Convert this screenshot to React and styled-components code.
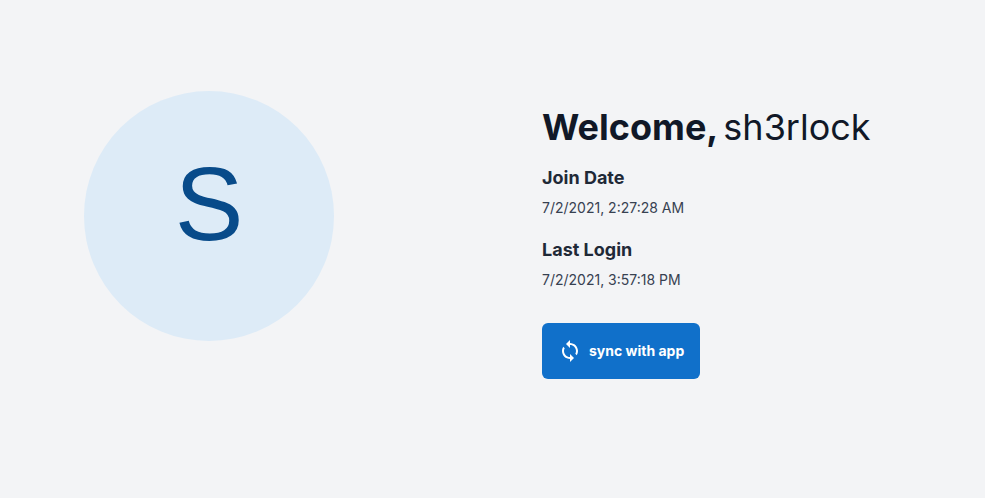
import React from "react";
import styled, { createGlobalStyle } from "styled-components";
import { MdSync } from "react-icons/md";

const GlobalStyle = createGlobalStyle`
  *, *::before, *::after { box-sizing: border-box; }
  body {
    margin: 0;
    background: #f3f4f6;
    font-family: Inter, "Liberation Sans", sans-serif;
  }
`;

const Page = styled.main`
  display: grid;
  grid-template-columns: 418px 1fr;
  column-gap: 124px;
  align-items: center;
  min-height: 100vh;
  padding-right: 24px;
`;

const AvatarColumn = styled.section`
  display: flex;
  justify-content: center;
  padding-bottom: 66px;
`;

const Avatar = styled.div`
  display: flex;
  align-items: center;
  justify-content: center;
  width: 250px;
  height: 250px;
  padding-bottom: 24px;
  border-radius: 50%;
  background: #ddebf7;
  color: #084b8a;
  font-family: Helvetica, "Liberation Sans", sans-serif;
  font-size: 103px;
  line-height: 1;
`;

const Profile = styled.section`
  display: flex;
  flex-direction: column;
  align-items: flex-start;
  padding-bottom: 14px;
`;

const Title = styled.h1`
  display: flex;
  flex-wrap: wrap;
  column-gap: 5px;
  margin: 0 0 16px;
  color: #111827;
  font-size: 36px;
  font-weight: 700;
  line-height: 42px;
`;

const Username = styled.span`
  font-weight: 400;
`;

const Details = styled.dl`
  margin: 0 0 15px;
`;

const Label = styled.dt`
  color: #1f2937;
  font-size: 18px;
  font-weight: 700;
  line-height: 28px;
`;

const Value = styled.dd`
  margin: 6px 0 18px;
  color: #374151;
  font-size: 14px;
  line-height: 20px;
`;

const SyncButton = styled.button`
  display: inline-flex;
  align-items: center;
  gap: 7px;
  height: 56px;
  padding: 0 16px;
  border: 0;
  border-radius: 6px;
  background: #1070ca;
  color: #ffffff;
  font: 700 14px/20px Inter, "Liberation Sans", sans-serif;
  cursor: pointer;
`;

const details = [
  { label: "Join Date", value: "7/2/2021, 2:27:28 AM" },
  { label: "Last Login", value: "7/2/2021, 3:57:18 PM" },
];

export default function App() {
  return (
    <>
      <GlobalStyle />
      <Page>
        <AvatarColumn>
          <Avatar>S</Avatar>
        </AvatarColumn>
        <Profile>
          <Title>
            Welcome, <Username>sh3rlock</Username>
          </Title>
          <Details>
            {details.map(({ label, value }) => (
              <React.Fragment key={label}>
                <Label>{label}</Label>
                <Value>{value}</Value>
              </React.Fragment>
            ))}
          </Details>
          <SyncButton type="button">
            <MdSync size={24} aria-hidden="true" />
            sync with app
          </SyncButton>
        </Profile>
      </Page>
    </>
  );
}
